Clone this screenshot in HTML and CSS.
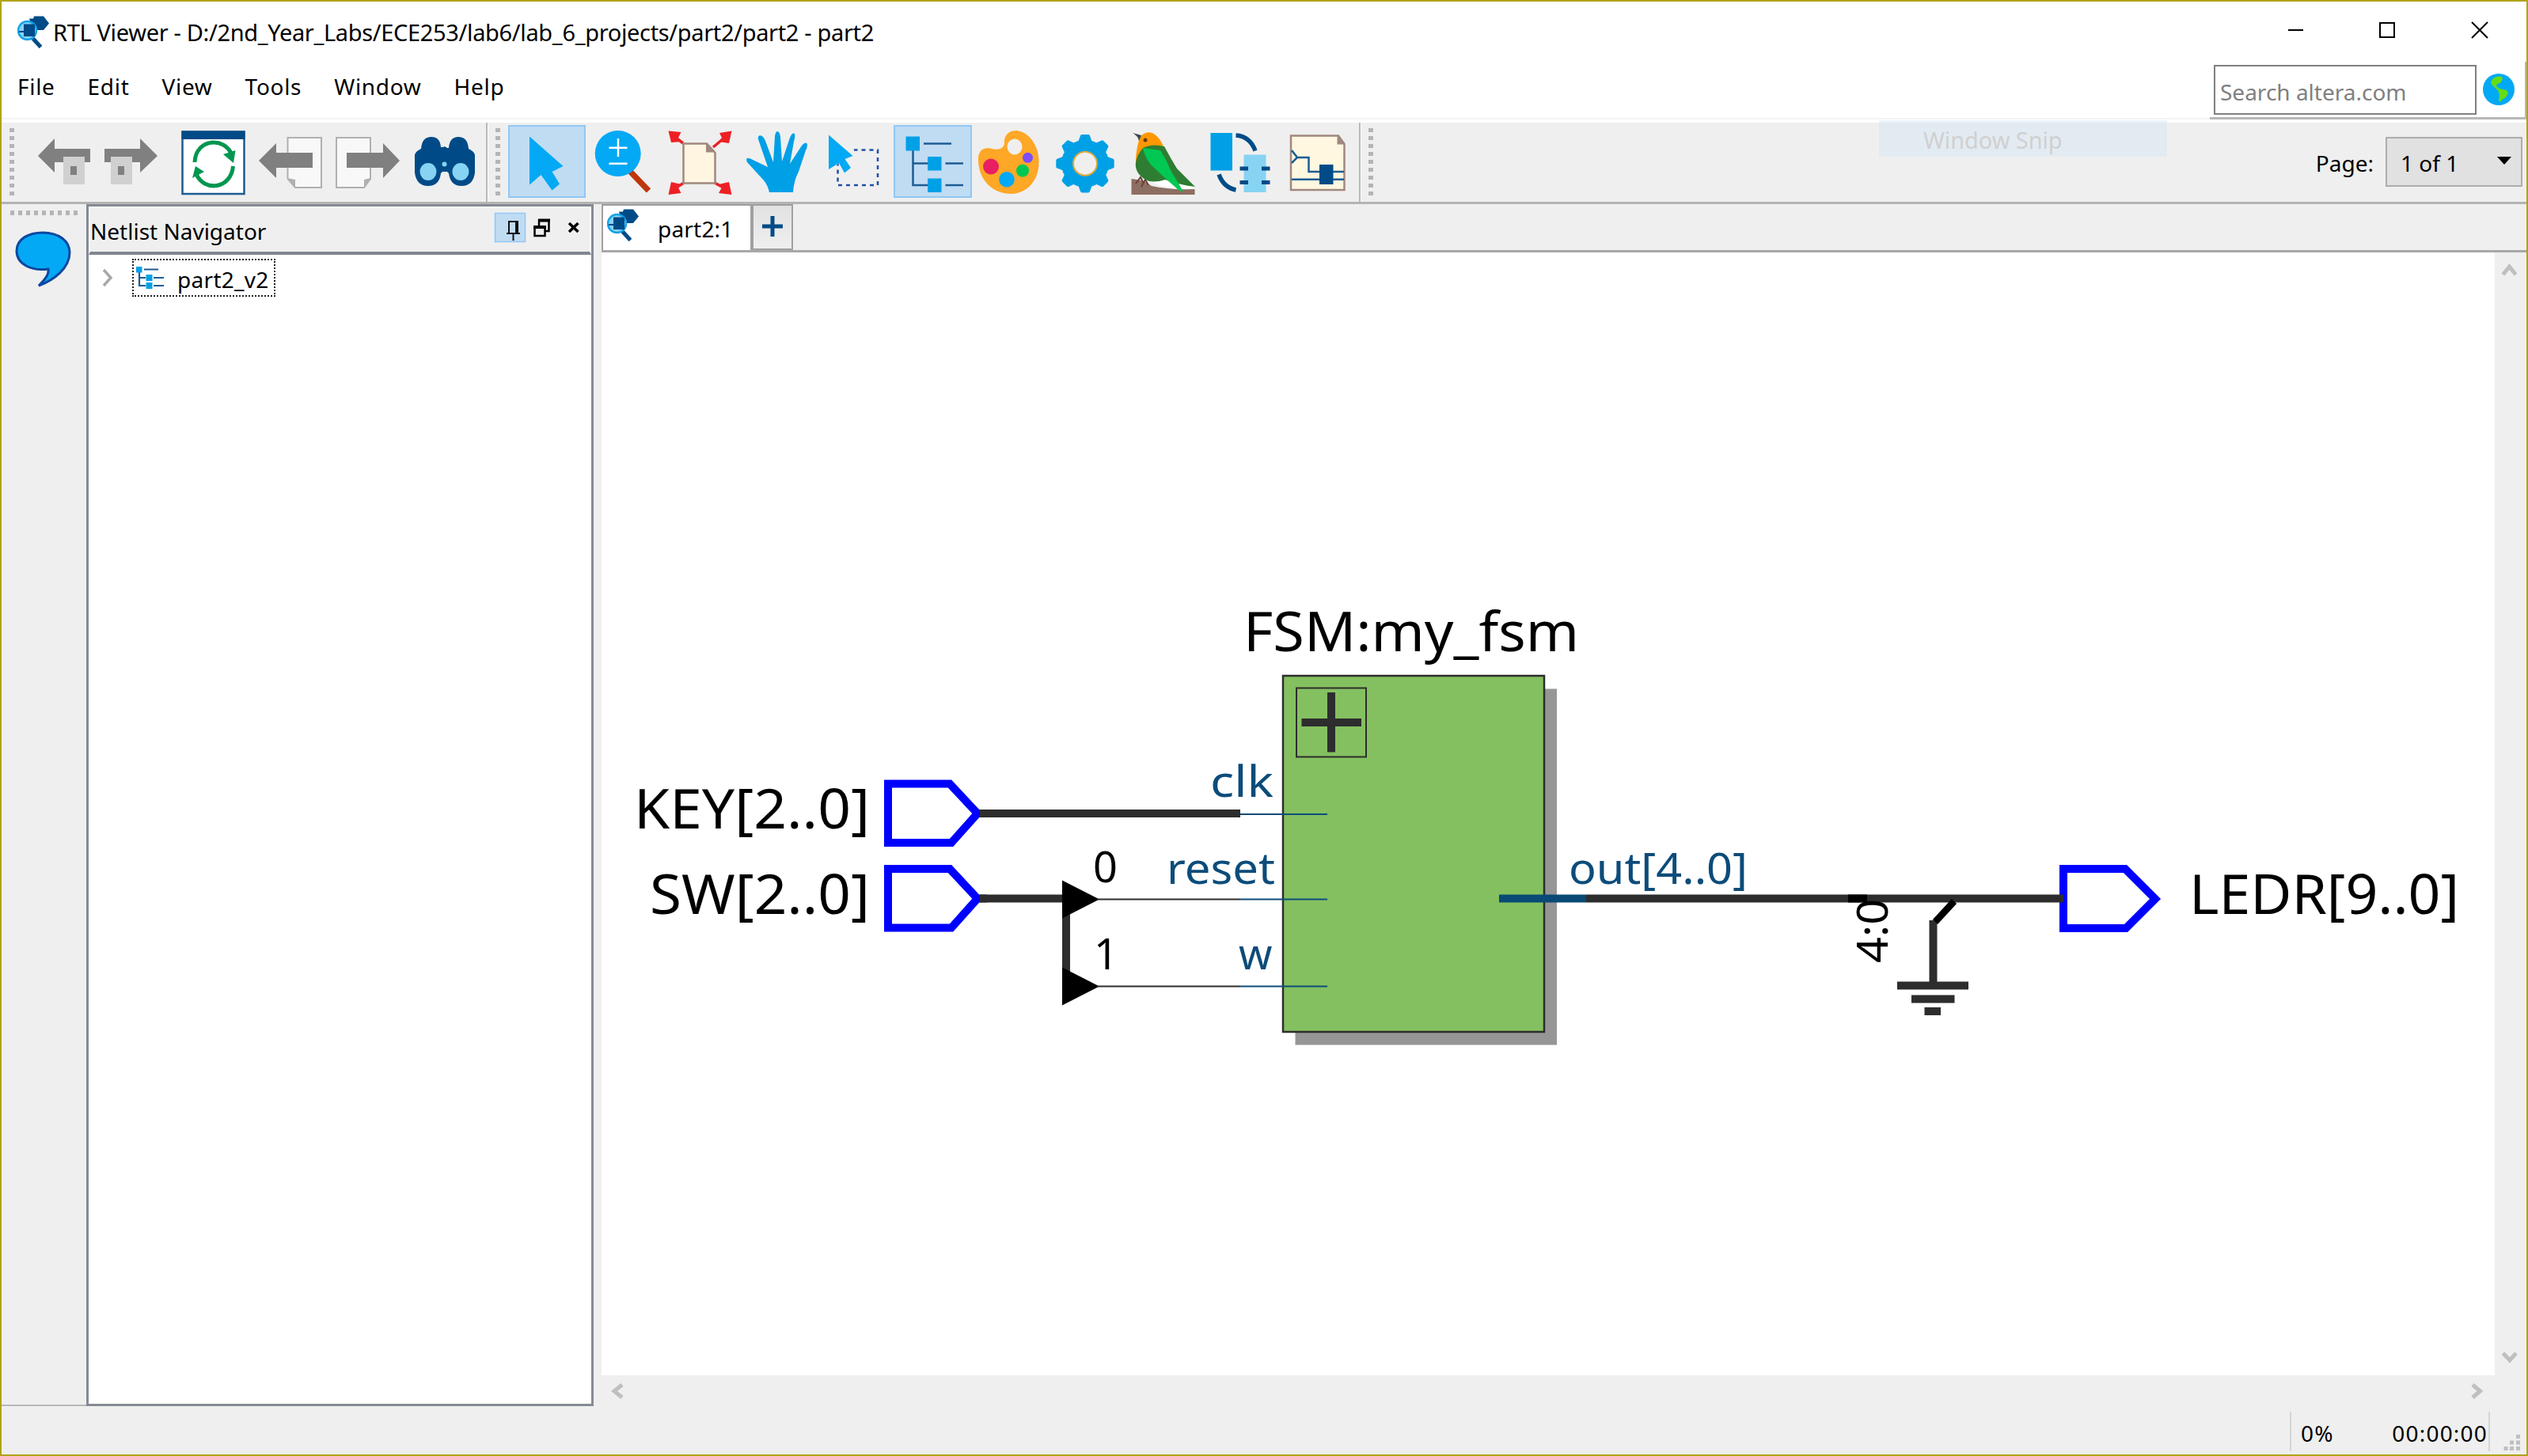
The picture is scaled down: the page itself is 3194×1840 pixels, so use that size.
FILE: index.html
```html
<!DOCTYPE html>
<html lang="en">
<head>
<meta charset="utf-8">
<title>RTL Viewer</title>
<link rel="stylesheet" href="styles.css">
</head>
<body>
<svg class="defs" width="0" height="0">
  <symbol id="app" viewBox="0 0 40 41">
    <path d="M15 3.5H20L21 .5H33L40 9.5L33 18H25L22 10L16 7Z" fill="#004b87"/>
    <path d="M19 28L29.500 39.500" stroke="#004b87" stroke-width="5"/>
    <circle cx="12.500" cy="18.500" r="11.500" fill="#87d3f3" stroke="#14a3e6" stroke-width="2.500"/>
    <path d="M8 10.500H22V26H8V21H2V19H8Z" fill="#004b87"/>
  </symbol>
</svg>
<div class="window">
  <header class="titlebar">
    <svg class="app-icon"><use href="#app"/></svg>
    <h1 class="title">RTL Viewer - D:/2nd_Year_Labs/ECE253/lab6/lab_6_projects/part2/part2 - part2</h1>
    <svg class="controls" viewBox="2870 20 290 40" fill="none" stroke="#000" stroke-width="2">
      <path d="M2891 38H2910M3007 29H3025V47H3007ZM3123 28L3143 48M3143 28L3123 48"/>
    </svg>
  </header>
  <div class="menubar">
    <nav class="menus"><span>File</span><span>Edit</span><span>View</span><span>Tools</span><span>Window</span><span>Help</span></nav>
    <div class="search">
      <div class="search-box">Search altera.com</div>
      <svg class="globe" viewBox="0 0 40 40"><circle cx="20" cy="20" r="20" fill="#03a9f4"/><path d="M12 7Q17 2 24 4L25 7L22 12L18 13L17 16L21 19L30 21L32 25L29 30L24 33L22 36L20 34L21 27L19 21L12 15L10 11Z" fill="#64dd17"/></svg>
    </div>
  </div>
  <div class="toolbar">
    <div class="grip"></div>
    <svg width="82" viewBox="42 155 82 100"><path d="M48 197L69 175V188H114V205H69V218Z" fill="#808080"/><path d="M80 198h27v35H80z" fill="#d0d0d0"/><path d="M89 210h8v11h-8z" fill="#808080"/></svg>
    <svg width="96" viewBox="124 155 96 100"><path d="M132 188H177V175L199 197L177 218V205H132Z" fill="#808080"/><path d="M140 198h27v35h-27z" fill="#d0d0d0"/><path d="M149 210h8v11h-8z" fill="#808080"/></svg>
    <svg width="96" viewBox="220 155 96 100"><path d="M230.500 166.500H308.500V245H230.500Z" fill="#fff" stroke="#1c5c93" stroke-width="2.500"/><path d="M229.500 165.500h80V176h-80z" fill="#004b87"/><g fill="none" stroke="#00964f" stroke-width="5"><path d="M246 205C247 175 284 172 293 196"/><path d="M294.500 210C292 239 258 243 248 220"/></g><path d="M297.500 190L295 206L282 195ZM247 210L243 225L258 217Z" fill="#00964f"/></svg>
    <svg width="98" viewBox="316 155 98 100"><path d="M363.500 174H406V237H373L363.500 226Z" fill="#f8f8f8" stroke="#b0b0b0" stroke-width="2"/><path d="M363 225L373 227V237Z" fill="#b0b0b0"/><path d="M327 203L349 181V193H395V212H349V225Z" fill="#808080"/></svg>
    <svg width="100" viewBox="414 155 100 100"><path d="M425 174H468V226L460 237H425Z" fill="#f8f8f8" stroke="#b0b0b0" stroke-width="2"/><path d="M468 225L460 227V237Z" fill="#b0b0b0"/><path d="M505 203L484 181V193H438V212H484V225Z" fill="#808080"/></svg>
    <svg width="100" viewBox="514 155 100 100"><path d="M524 196Q525 191 532 188Q533 173 545 173Q556 173 557 186H560L562 185L565 187H567Q568 173 579 173Q591 173 592 188Q599 191 600 196V218Q598 235 583 235Q569 235 567 219L565 217H559L557 219Q555 235 541 235Q526 235 524 218Z" fill="#004b87"/><ellipse cx="541" cy="217" rx="10.500" ry="11" fill="#87d3f3"/><ellipse cx="582" cy="217" rx="10.500" ry="11" fill="#87d3f3"/><circle cx="561.500" cy="207.500" r="3" fill="#87d3f3"/></svg>
    <div class="sep"></div>
    <div class="grip"></div>
    <svg class="on" width="98" viewBox="642 155 98 100"><path d="M669 172.500L711.500 210L697.500 217L707 232.500L697.500 240.500L683.500 221L669 233.500Z" fill="#03a9f4"/></svg>
    <svg width="95" viewBox="740 155 95 100"><path d="M796.500 217L819.500 241" stroke="#bf360c" stroke-width="7.500"/><circle cx="780.700" cy="194" r="29" fill="#03a9f4"/><path d="M769.500 186.800H792.500M781 175V198M769.500 206.700H792.500" stroke="#fff" stroke-width="2.500"/></svg>
    <svg width="97" viewBox="835 155 97 100"><g stroke="#ed2024" stroke-width="3.500"><path d="M850 171L863 181M919 171L901 186M850 240L864 231M919 240L903 231"/></g><path d="M844.500 165.500L860.500 167L857 174L861 179L848 180ZM924.500 165.500L909 168L912 174L908 179L921 181ZM844.500 246L860.500 244L857 237L861 233L848 230ZM924.500 246L908 244L912 237L908 233L921 230Z" fill="#ed2024"/><path d="M863.500 181.500H893L903.500 193V231.500H863.500Z" fill="#fff5e0" stroke="#a1887f" stroke-width="2.500"/><path d="M892 181L904 192.500H892Z" fill="#a1887f" /></svg>
    <svg width="98" viewBox="932 155 98 100"><path d="M972 243Q970 234 965 228L944 205Q941 198 948 200.500L970 211L958 176Q957 170 962 171.500Q965 173 967 178L977 205L979 172Q980 166 982 166Q985 166 986 173L988 204L998 174Q1001 167 1004 169Q1005 172 1003 179L998 207L1013 184Q1018 178 1020 182Q1020 187 1018 190L1009 217Q1003 228 1002 243Z" fill="#00a0e6"/></svg>
    <svg width="99" viewBox="1030 155 99 100"><path d="M1058.500 189.500H1109V234H1058.500Z" fill="none" stroke="#2050a5" stroke-width="2.500" stroke-dasharray="5 5"/><path d="M1045 169H1060L1079 189V193H1077.500L1068 201L1045 216Z" fill="#efefef"/><path d="M1047 170.500L1077.500 197L1067.500 201L1075 212L1067 218.500L1060 206L1047 214Z" fill="#03a9f4"/></svg>
    <svg class="on" width="99" viewBox="1129 155 99 100"><path d="M1153.500 190V234H1172M1153.500 206.500H1172M1167 181.500H1202M1194.500 206.500H1217M1194.500 234H1217" fill="none" stroke="#1c5c93" stroke-width="2.500"/><path d="M1144.500 172.500h17.500v18h-17.500zM1172 198h17.500v17.500H1172zM1172 225.500h17.500V243H1172z" fill="#00a0e6"/></svg>
    <svg width="95" viewBox="1228 155 95 100"><path d="M1236 202C1236 186 1247 187 1252 187.500C1260 190 1268 189 1269 181C1268 172 1274 165 1284 165C1300 166 1313 185 1312.500 204C1313 228 1298 244 1278 245C1252 245 1236 225 1236 202Z" fill="#ffa726"/><ellipse cx="1282" cy="185.500" rx="9.500" ry="10" fill="#efefef"/><circle cx="1252" cy="210.500" r="10" fill="#e91e63"/><circle cx="1272" cy="226.700" r="9.800" fill="#03a9f4"/><circle cx="1292" cy="215.700" r="8" fill="#00c853"/><circle cx="1298.500" cy="199.300" r="6.500" fill="#7c4dff"/></svg>
    <svg width="95" viewBox="1323 155 95 100"><g fill="#00a0e6"><circle cx="1371" cy="206.700" r="30"/><g stroke="#00a0e6" stroke-width="4" stroke-linejoin="round"><path d="M1367 172H1375L1378 180H1364Z"/><path d="M1367 172H1375L1378 180H1364Z" transform="rotate(45 1371 206.700)"/><path d="M1367 172H1375L1378 180H1364Z" transform="rotate(90 1371 206.700)"/><path d="M1367 172H1375L1378 180H1364Z" transform="rotate(135 1371 206.700)"/><path d="M1367 172H1375L1378 180H1364Z" transform="rotate(180 1371 206.700)"/><path d="M1367 172H1375L1378 180H1364Z" transform="rotate(225 1371 206.700)"/><path d="M1367 172H1375L1378 180H1364Z" transform="rotate(270 1371 206.700)"/><path d="M1367 172H1375L1378 180H1364Z" transform="rotate(315 1371 206.700)"/></g></g><circle cx="1371" cy="206.700" r="15" fill="#efefef" stroke="#dca83a" stroke-width="2"/></svg>
    <svg width="100" viewBox="1418 155 100 100"><path d="M1455 230Q1480 224 1509 235V239Q1475 240 1455 230Z" fill="#fff"/><path d="M1429.500 226Q1445 227 1455 235Q1475 240 1509.500 239V246H1429.500Z" fill="#8d6e63"/><path d="M1435 232L1441 224L1445 232M1442 236L1447 227L1451 234" stroke="#6d4037" stroke-width="2" fill="none"/><path d="M1435 206C1435 193 1437 184 1440 174Q1446 165 1456 168Q1466 173 1471 188L1445 196Z" fill="#ff9800"/><path d="M1431 168L1442 171L1439 178Q1438 172 1431 168Z" fill="#37474f"/><circle cx="1447" cy="177" r="2.500" fill="#6d3a10"/><path d="M1444 187Q1455 181 1471 185Q1479 200 1487 213Q1499 225 1510 236Q1492 234 1472 227Q1457 232 1447 227Q1433 218 1435 205Q1437 195 1444 187Z" fill="#2e7d32"/><path d="M1444 187L1466 190Q1474 202 1479 215L1495 242L1490 241Q1465 219 1453 207Q1446 197 1444 187Z" fill="#00c853"/></svg>
    <svg width="98" viewBox="1518 155 98 100"><path d="M1529.500 168H1557V215.500H1529.500Z" fill="#00a0e6"/><path d="M1571.500 195.500h28V243h-28z" fill="#87d3f3"/><path d="M1566.500 210.500h10.500v5h-10.500zM1566.500 228h10.500v5h-10.500zM1594 210.500h10.500v5H1594zM1594 228h10.500v5H1594z" fill="#004b87"/><path d="M1561.500 171Q1579 172 1586 190.500M1540 220.500Q1546 237 1561.500 240" fill="none" stroke="#004b87" stroke-width="5.500"/></svg>
    <svg width="101" viewBox="1616 155 101 100"><path d="M1631 171.500H1691L1698.500 182V240H1631Z" fill="#fff7e0" stroke="#a1887f" stroke-width="2.500"/><path d="M1689.500 171L1699 182.500H1689.500Z" fill="#a1887f"/><path d="M1632 190L1639 199L1632 206M1639 199H1653.500V217H1698M1632 226.800H1698" fill="none" stroke="#1c5c93" stroke-width="2.500"/><path d="M1667 208h17.500v25H1667z" fill="#004b87"/></svg>
    <div class="sep"></div>
    <div class="grip"></div>
    <div class="pager"><span class="pager-label">Page:</span><div class="combo"><span>1 of 1</span><svg width="18" height="10" viewBox="0 0 18 10"><path d="M0 0H18L9 10Z"/></svg></div></div>
    <div class="snip">Window Snip</div>
  </div>
  <div class="workspace">
    <aside class="dock">
      <div class="hgrip"></div>
      <svg width="76" height="76" viewBox="17 292 76 76"><path d="M54 297C75 297 88 308 88 322C88 342 68 357 49 364C57 356 62 350 61 343C40 346 21 337 21 320C21 305 36 297 54 297Z" fill="#03a9f4" stroke="#0d47a1" stroke-width="3"/></svg>
    </aside>
    <section class="navigator">
      <div class="nav-head"><span>Netlist Navigator</span>
        <svg width="118" height="50" viewBox="623 262 118 50"><path d="M625.500 268.500H663.500V304.500H625.500Z" fill="#c0dcf3" stroke="#90c8f6" stroke-width="1.500"/><path d="M643 293V279H654V293M640 294H657M648.500 294V303M652 279V293" fill="none" stroke="#111" stroke-width="2"/><path d="M681 284V277.500H693.500V291H689M675.500 286.500H688.500V297H675.500Z" fill="none" stroke="#000" stroke-width="2.500"/><path d="M680 275.500h15v4h-15zM674 284h16v4h-16z"/><path d="M719 281L730.500 292M730.500 281L719 292" stroke="#000" stroke-width="3.500"/></svg>
      </div>
      <div class="tree">
        <svg width="14" height="22" viewBox="0 0 14 22"><path d="M2 1L11 11L2 21" fill="none" stroke="#a8a8a8" stroke-width="3.500"/></svg>
        <div class="node">
          <svg width="36" height="30" viewBox="172 337 36 30"><path d="M176 345V362H184M176 352H184M182 341.500H200M194 352H207M194 362H207" fill="none" stroke="#1c5c93" stroke-width="2.200"/><path d="M172 338h7.500v7.500H172zM184.500 348h8v8h-8zM184.500 358h8v8h-8z" fill="#00a0e6"/></svg>
          <span>part2_v2</span>
        </div>
      </div>
    </section>
    <main class="main">
      <div class="tabs">
        <div class="tab"><svg class="app-icon"><use href="#app"/></svg><span>part2:1</span></div>
        <div class="add"><svg width="26" height="26" viewBox="0 0 26 26"><path d="M0 13H26M13 0V26" stroke="#004b87" stroke-width="5"/></svg></div>
      </div>
      <div class="view">
        <svg class="canvas" viewBox="760 319 2392 1419">
          <path d="M1636.500 870.500H1967V1320.500H1636.500Z" fill="#969696"/>
          <path d="M1621 854H1951V1304H1621Z" fill="#84c060" stroke="#2d2d2d" stroke-width="2.500"/>
          <path d="M1638 869.500H1726V956.500H1638Z" fill="none" stroke="#2d2d2d" stroke-width="2"/>
          <g stroke="#2d2d2d" stroke-width="10" fill="none">
            <path d="M1644.500 913H1720M1682 875V950.500"/>
            <path d="M1237 1028H1567M1237 1135.500H1343M1347 1136V1246M2004 1135.500H2607M2442.500 1163V1245M2397 1245.500H2487M2415 1262.500H2469.500M2431.500 1278H2452"/>
          </g>
          <g fill="none" stroke="#00f" stroke-width="10">
            <path d="M1122 990.500H1200L1235 1028L1202 1065H1122Z"/>
            <path d="M1122 1098H1200L1235 1135.500L1202 1172.500H1122Z"/>
            <path d="M2607 1098H2685L2723 1136L2686 1173H2607Z"/>
          </g>
          <path d="M1238 1028H1247M1238 1135.500H1247M2595 1135.500M2602 1135.500H2607.500" stroke="#2d2d2d" stroke-width="10"/>
          <path d="M1342 1112.500L1389 1136.500L1342 1160.500ZM1342 1222.500L1389 1246.500L1342 1270.500Z"/>
          <path d="M1386 1136.500H1567M1386 1246.500H1567" stroke="#2d2d2d" stroke-width="2"/>
          <path d="M1567 1029H1677M1567 1136.500H1677M1567 1246.500H1677" stroke="#0c4c7a" stroke-width="2.200"/>
          <path d="M1894 1135.500H2004" stroke="#084a75" stroke-width="10"/>
          <path d="M2335 1135.500H2359" stroke="#000" stroke-width="10"/>
          <path d="M2469 1139L2445 1165" stroke="#000" stroke-width="8.500"/>
          <g class="big">
            <text x="1571" y="822.500" textLength="424" lengthAdjust="spacingAndGlyphs">FSM:my_fsm</text>
            <text x="801" y="1047" textLength="298" lengthAdjust="spacingAndGlyphs">KEY[2..0]</text>
            <text x="821" y="1154.500" textLength="278" lengthAdjust="spacingAndGlyphs">SW[2..0]</text>
            <text x="2766" y="1154.500" textLength="341" lengthAdjust="spacingAndGlyphs">LEDR[9..0]</text>
          </g>
          <g class="small">
            <text x="1381" y="1114.500">0</text>
            <text x="1382" y="1225">1</text>
            <text transform="translate(2385 1217) rotate(-90)" textLength="81" lengthAdjust="spacingAndGlyphs">4:0</text>
          </g>
          <g class="small pin">
            <text x="1529" y="1007" textLength="80" lengthAdjust="spacingAndGlyphs">clk</text>
            <text x="1474" y="1117" textLength="137" lengthAdjust="spacingAndGlyphs">reset</text>
            <text x="1565" y="1225">w</text>
            <text x="1982" y="1117" textLength="226" lengthAdjust="spacingAndGlyphs">out[4..0]</text>
          </g>
        </svg>
        <svg class="vscroll" viewBox="3152 319 40 1419"><path d="M3162.500 347L3170.500 337L3178.500 347M3162.500 1710L3171 1719L3179 1710" fill="none" stroke="#bfbfbf" stroke-width="5"/></svg>
      </div>
      <svg class="hscroll" viewBox="760 1738 2432 38"><path d="M786 1749L776 1757L786 1765M3124 1749L3133.500 1757L3124 1765" fill="none" stroke="#bfbfbf" stroke-width="5"/></svg>
    </main>
  </div>
  <footer class="status">
    <div class="cells"><span>0%</span><span>00:00:00</span></div>
    <svg width="22" height="22" viewBox="0 0 22 22"><path d="M16 1h5v5h-5zM8 8.500h5v5H8zM16 8.500h5v5h-5zM.5 16h5v5h-5zM8 16h5v5H8zM16 16h5v5h-5z" fill="#bfbfbf"/></svg>
  </footer>
</div>
</body>
</html>
```
FILE: styles.css
```css
* { box-sizing: border-box; }
body { margin: 0; background: #fff; }
svg { display: block; flex: none; }
.defs { position: absolute; }
.window {
  width: 3194px; height: 1840px; border: 2px solid #b0a316;
  display: flex; flex-direction: column; background: #efefef; color: #000;
  font: 28px "Noto Sans", sans-serif; white-space: nowrap; overflow: hidden;
}
.app-icon { width: 40px; height: 41px; }

.titlebar { height: 76px; flex: none; background: #fff; display: flex; align-items: center; padding: 0 32px 0 20px; }
.title { margin: 0 auto 0 5px; font-size: 29px; font-weight: 400; letter-spacing: -0.34px; }
.controls { width: 290px; height: 40px; }

.menubar { height: 77px; flex: none; background: #fff; display: flex; justify-content: space-between; border-bottom: 4px solid #fff; box-shadow: inset 0 -2px #f4f4f4; }
.menus { display: flex; gap: 41px; padding: 12px 0 0 20px; line-height: 38px; letter-spacing: 0.7px; }
.search { width: 400px; height: 73px; border: solid #b8b8b8; border-width: 0 2px 3px 0; display: flex; align-items: center; padding: 0 13px 0 5px; justify-content: space-between; }
.search-box { width: 332px; height: 63px; border: 2.500px solid #808080; color: #808080; padding: 10px 0 0 6px; line-height: 44px; }
.globe { width: 40px; height: 40px; }

.toolbar { height: 103px; flex: none; display: flex; position: relative; border-bottom: 3px solid #b4b4b4; }
.toolbar > svg { height: 100px; }
.on { background: #c0dcf3; outline: 2px solid #90c8f6; outline-offset: -2px; clip-path: inset(3px 0 5px 0); box-shadow: inset 0 5px #90c8f6, inset 0 -7px #90c8f6; }
.grip { width: 25px; margin: 6px 0 7px; padding-left: 9px; }
.grip::before { content: ""; display: block; width: 6px; height: 86px; background: repeating-linear-gradient(#efefef 0 1px, #b5b5b5 1px 6px, #efefef 6px 10px); clip-path: polygon(100% 0, 100% 100%, 0 100%, 0 0); }
.grip:first-child { width: 40px; padding-left: 10px; }
.sep { width: 3px; background: #b8b8b8; border-right: 1px solid #fff; }
.pager { margin-left: auto; display: flex; align-items: center; padding: 0 5px 2px 0; }
.pager-label { margin: 4px 15px 0 0; }
.combo { width: 173px; height: 63px; background: #e1e1e1; border: 2.500px solid #adadad; display: flex; justify-content: space-between; align-items: center; padding: 4px 12px 0 17px; }
.combo svg { margin-bottom: 6px; }
.snip { position: absolute; left: 2372px; top: -3px; width: 364px; height: 46px; background: #e3ebf2; border-top: 3px solid #ebf4fb; color: #d0d0d0; font-size: 29px; line-height: 43px; padding-left: 56px; letter-spacing: -0.1px; }

.workspace { flex: 1; display: flex; min-height: 0; }
.dock { width: 107px; border-bottom: 2px solid #b8b8b8; padding: 8px 0 0 10px; }
.hgrip { width: 86px; height: 6px; background: repeating-linear-gradient(90deg, #efefef 0 1px, #b5b5b5 1px 6px, #efefef 6px 10px); }
.dock svg { margin: 17px 0 0 5px; }
.navigator { width: 641px; border: 3px solid #858b94; display: flex; flex-direction: column; background: #fff; }
.nav-head { height: 61px; flex: none; background: #efefef; border: 2px solid #fff; border-bottom: 4px solid #808791; display: flex; justify-content: space-between; padding: 0 4px 0 0; line-height: 59px; }
.tree { display: flex; align-items: center; gap: 24px; padding: 5px 0 0 17px; }
.node { width: 181px; height: 48px; border: 2px dotted #222; display: flex; align-items: center; padding: 0 3px; gap: 16px; }
.node span { padding-top: 4px; letter-spacing: 0.3px; }

.main { flex: 1; margin-left: 10px; display: flex; flex-direction: column; }
.tabs { height: 61px; flex: none; display: flex; border-bottom: 3px solid #a8a8a8; }
.tab { width: 188px; background: #fff; border-left: 2px solid #a0a0a0; border-top: 2px solid #a0a0a0; display: flex; gap: 24px; padding: 4px 0 0 5px; }
.tab span { line-height: 50px; letter-spacing: 0.2px; }
.add { width: 54px; background: linear-gradient(#e2e2e2, #efefef); border: 2px solid #a0a0a0; border-left-width: 4px; display: grid; place-items: center; padding-bottom: 2px; }
.view { flex: 1; display: flex; min-height: 0; }
.canvas { width: 2392px; height: 1419px; background: #fff; }
.vscroll { width: 40px; height: 1419px; }
.hscroll { width: 2432px; height: 38px; }
.big { font-size: 70px; }
.small { font-size: 54px; }
.pin { fill: #0c4c7a; }

.status { height: 61px; flex: none; display: flex; justify-content: flex-end; align-items: flex-end; gap: 17px; padding: 0 7px 4px 0; }
.cells { width: 253px; height: 50px; border: solid #d5d5d5; border-width: 0 2.500px; display: flex; justify-content: space-between; padding: 8px 1px 0 12px; line-height: 38px; letter-spacing: 1.2px; }
```
